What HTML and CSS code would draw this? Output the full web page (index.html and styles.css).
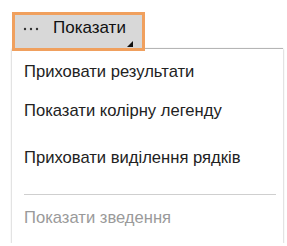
FILE: index.html
```html
<!DOCTYPE html>
<html lang="uk">
<head>
<meta charset="utf-8">
<link rel="stylesheet" href="styles.css">
</head>
<body>
<div class="wrap">
  <div class="btn">
    <svg class="dots" width="18" height="4" viewBox="0 0 18 4"><circle cx="2" cy="2" r="1.2" fill="#333"/><circle cx="8" cy="2" r="1.2" fill="#333"/><circle cx="14" cy="2" r="1.2" fill="#333"/></svg>
    <span class="label">Показати</span>
    <svg class="corner" width="6" height="6" viewBox="0 0 6 6"><polygon points="6,0 6,6 0,6" fill="#111"/></svg>
  </div>
  <div class="menu">
    <div class="item i1">Приховати результати</div>
    <div class="item i2">Показати колірну легенду</div>
    <div class="item i3">Приховати виділення рядків</div>
    <div class="sep"></div>
    <div class="item i4 disabled">Показати зведення</div>
  </div>
</div>
</body>
</html>
```
FILE: styles.css
```css
html, body {
  margin: 0;
  padding: 0;
  background: #fff;
}
body {
  font-family: "Liberation Sans", Arial, sans-serif;
  color: #222;
}
.wrap {
  padding: 12px 4px 0 12px;
}
.btn {
  position: relative;
  z-index: 2;
  width: 127px;
  height: 33px;
  border: 3px solid #f0a05e;
  background: #d8d8d8;
  display: flex;
  align-items: flex-start;
  box-sizing: content-box;
}
.dots {
  margin: 12px 0 0 8px;
}
.label {
  margin: 2px 0 0 12px;
  font-size: 17px;
  line-height: 22px;
  color: #111;
  white-space: nowrap;
}
.corner {
  margin: 26px 0 0 auto;
  margin-right: 9px;
}
.menu {
  margin-top: -3px;
  width: 271px;
  background: #fff;
  border-top: 1px solid #b5b5b5;
  box-shadow: 0 1px 2px rgba(0,0,0,0.35);
  padding: 13px 0 15px 0;
  box-sizing: border-box;
}
.item {
  padding-left: 12px;
  font-size: 16.6px;
  line-height: 20px;
  color: #222;
  white-space: nowrap;
}
.i2 { margin-top: 19px; }
.i3 { margin-top: 27px; }
.sep {
  margin: 26px 7px 0 12px;
  height: 1px;
  background: #cfcfcf;
}
.i4 { margin-top: 13px; }
.disabled { color: #9a9a9a; }
```
